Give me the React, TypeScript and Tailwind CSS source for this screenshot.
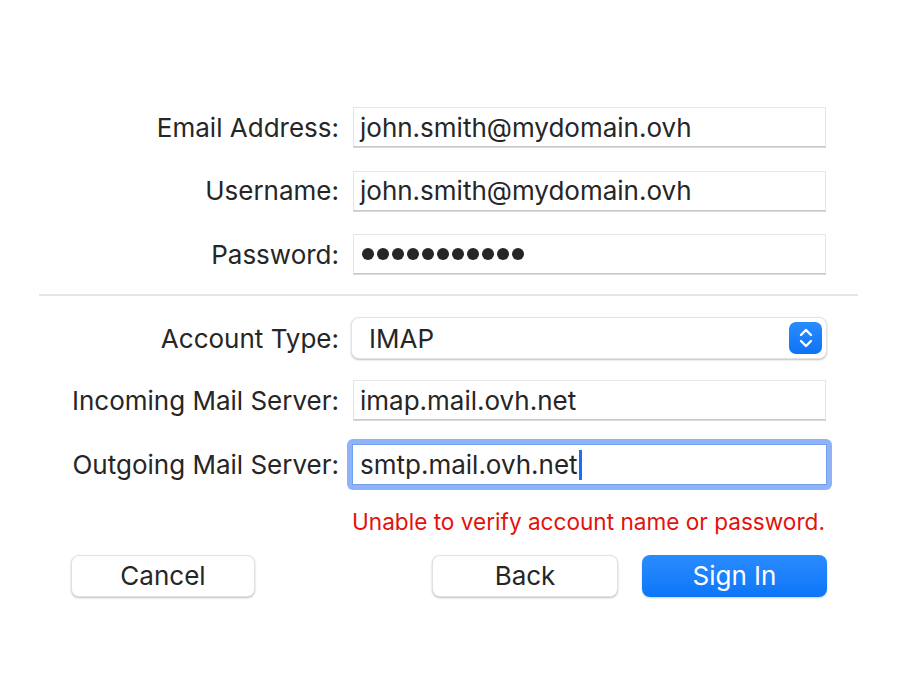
import React from "react";

const font = { fontFamily: "Inter, 'Noto Sans', 'Liberation Sans', sans-serif" };

const Field = ({ value, dots }: { value: string; dots?: boolean }) => (
  <div className="flex h-[40px] w-[473px] items-center border border-[#e6e6e6] border-b-[#c9c9c9] bg-white pl-[6px] shadow-[0_1px_0_#d9d9d9] text-[26px] text-[#262626]">
    {dots ? (
      <span className="flex gap-[3px] pl-[2px]">
        {Array.from({ length: 11 }).map((_, i) => (
          <span key={i} className="block h-[12px] w-[12px] rounded-full bg-[#262626]" />
        ))}
      </span>
    ) : (
      value
    )}
  </div>
);

const Row = ({ label, children }: { label: string; children: React.ReactNode }) => (
  <div className="flex items-center">
    <div className="w-[301px] pr-[1px] text-right text-[26px] text-[#262626]">{label}</div>
    <div className="ml-[13px]">{children}</div>
  </div>
);

const Stepper = () => (
  <div className="flex h-[32px] w-[33px] items-center justify-center rounded-[7px] bg-gradient-to-b from-[#2a8bff] to-[#0a74f5]">
    <svg width="16" height="22" viewBox="0 0 16 22" fill="none" stroke="white" strokeWidth="2.4" strokeLinecap="round" strokeLinejoin="round">
      <path d="M3 8 L8 3 L13 8" />
      <path d="M3 14 L8 19 L13 14" />
    </svg>
  </div>
);

export default function App() {
  return (
    <div className="h-[675px] w-[900px] bg-white" style={font}>
      <div className="flex flex-col px-[39px] pt-[107px]">
        <div className="flex flex-col gap-[23.5px]">
          <Row label="Email Address:">
            <Field value="john.smith@mydomain.ovh" />
          </Row>
          <Row label="Username:">
            <Field value="john.smith@mydomain.ovh" />
          </Row>
          <Row label="Password:">
            <Field value="" dots />
          </Row>
        </div>

        <div className="mt-[20px] h-[2px] w-[819px] bg-[#e6e6e6]" />

        <div className="mt-[21px] flex flex-col">
          <Row label="Account Type:">
            <div className="-ml-[2px] flex h-[42px] w-[476px] items-center justify-between rounded-[8px] border border-[#e3e3e3] bg-white pl-[17px] pr-[4px] text-[26px] text-[#262626] shadow-[0_1px_2px_rgba(0,0,0,0.25)]">
              <span>IMAP</span>
              <Stepper />
            </div>
          </Row>
          <div className="mt-[21px]">
            <Row label="Incoming Mail Server:">
              <Field value="imap.mail.ovh.net" />
            </Row>
          </div>
          <div className="mt-[25px]">
            <Row label="Outgoing Mail Server:">
              <div className="-m-[6px] rounded-[6px] bg-[#8fb3f7] p-[5px]">
                <div className="flex h-[41px] w-[475px] items-center border border-[#729ff0] bg-white pl-[7px] text-[26px] text-[#262626]">
                  smtp.mail.ovh.net
                  <span className="ml-[1px] block h-[30px] w-[3px] bg-[#1b6ff5]" />
                </div>
              </div>
            </Row>
          </div>
          <div className="ml-[313px] mt-[21px] text-[22.6px] text-[#e3120b]">
            Unable to verify account name or password.
          </div>
        </div>

        <div className="mt-[16px] flex items-center">
          <button className="ml-[32px] h-[42px] w-[184px] rounded-[8px] border border-[#e2e2e2] bg-white text-[26px] text-[#262626] shadow-[0_1px_2px_rgba(0,0,0,0.25)]">
            Cancel
          </button>
          <button className="ml-[177px] h-[42px] w-[186px] rounded-[8px] border border-[#e2e2e2] bg-white text-[26px] text-[#262626] shadow-[0_1px_2px_rgba(0,0,0,0.25)]">
            Back
          </button>
          <button className="ml-[24px] h-[42px] w-[185px] rounded-[8px] bg-gradient-to-b from-[#2a8bff] to-[#0a76f7] text-[26px] text-white shadow-[0_1px_2px_rgba(0,0,0,0.2)]">
            Sign In
          </button>
        </div>
      </div>
    </div>
  );
}
